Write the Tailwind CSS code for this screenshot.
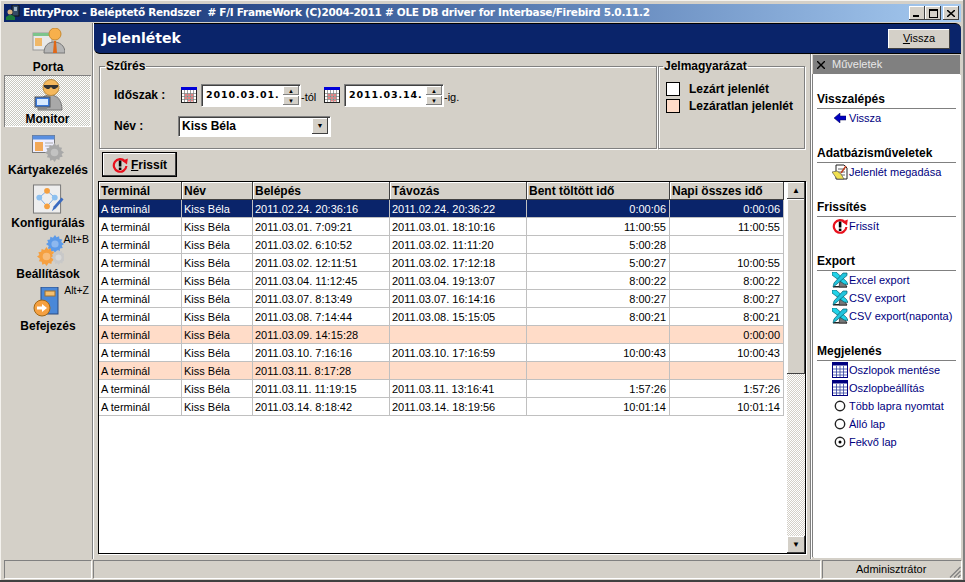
<!DOCTYPE html>
<html><head><meta charset="utf-8"><title>EntryProx</title>
<script src="https://cdn.jsdelivr.net/npm/@tailwindcss/browser@4"></script></head>
<body class="bg-[#d4d0c8]">
<svg class="hidden"><defs>
<symbol id="refresh" viewBox="0 0 16 16"><path d="M12.800 4.200A6.300 6.300 0 1 0 14.400 9" fill="none" stroke="#e8101c" stroke-width="2.200"/><path d="M10 3.800 15.800 1.500 15 7.500z" fill="#e8101c"/><rect x="6.800" y="3.500" width="2.600" height="6" fill="#000"/><rect x="6.800" y="10.600" width="2.600" height="2.400" fill="#000"/></symbol>
<symbol id="xls" viewBox="0 0 16 16"><path d="M1 14h14v1.500H1z" fill="#222"/><path d="M8 9l5 2.500 2 3.500H7z" fill="#777" stroke="#222" stroke-width=".7"/><path d="M0 0h4l10.500 9.500 1.500 3-4-.5L0 3z" fill="#22d3e8" stroke="#075f6d" stroke-width=".7"/><path d="M11 1h4v2.500L5 12l-4 3 1-4z" fill="#22c4dd" stroke="#075f6d" stroke-width=".7"/></symbol>
<symbol id="tbl" viewBox="0 0 16 16"><rect x=".5" y=".5" width="15" height="15" fill="#fff" stroke="#000080"/><path d="M.5 .5h15v3H.5z" fill="#000080"/><path d="M1 7h14M1 10h14M1 13h14M4.500 4v11M8 4v11M11.500 4v11" stroke="#3040a0" stroke-width=".8"/></symbol>
<symbol id="cal" viewBox="0 0 16 16"><rect x=".5" y=".5" width="15" height="15" fill="#fff" stroke="#222"/><rect width="16" height="3" fill="#0000d8"/><path d="M1 6.500h14M1 9.500h14M1 12.500h14M3.500 3v12M6.500 3v12M9.500 3v12M12.500 3v12" stroke="#777" stroke-width=".7"/><path d="M4 7h2v2H4zM7 7h2v2H7zM10 7h2v2h-2zM4 10h2v2H4zM7 10h2v2H7zM10 10h2v2h-2zM7 13h2v1.500H7zM10 13h2v1.500h-2z" fill="#e88080"/></symbol>
<symbol id="gear" viewBox="0 0 20 20"><path d="M10 0l1.700 2.500 2.800-1.100.5 3 3 .5-1.100 2.800L20 10l-2.500 1.700 1.100 2.800-3 .5-.5 3-2.800-1.100L10 20l-1.700-2.500-2.800 1.100-.5-3-3-.5 1.100-2.800L0 10l2.500-1.700-1.100-2.800 3-.5.5-3 2.800 1.100z"/><circle cx="10" cy="10" r="4" fill-opacity=".3" fill="#fff"/></symbol>
<symbol id="radio" viewBox="0 0 12 12"><circle cx="6" cy="6" r="4.700" fill="#fff" stroke="#222" stroke-width="1.400"/></symbol>
<symbol id="radioOn" viewBox="0 0 12 12"><circle cx="6" cy="6" r="4.700" fill="#fff" stroke="#222" stroke-width="1.400"/><circle cx="6" cy="6" r="1.500" fill="#000"/></symbol>
</defs></svg>

<div class="w-[965px] h-[582px] overflow-hidden flex flex-col bg-[#d4d0c8] pt-[4px] px-[4px] pb-[2px] shadow-[inset_0_-2px_#404040,inset_-2px_0_#808080,inset_1px_1px_#f4f2ee] font-['Liberation_Sans',sans-serif] text-[11px] text-black">

<!-- title bar -->
<div class="h-[18px] shrink-0 flex items-center bg-gradient-to-r from-[#0a246a] to-[#a6caf0] pl-[1px] pr-[2px]">
<svg class="w-[16px] h-[16px] shrink-0" viewBox="0 0 16 16"><rect x="7" y="0" width="7" height="11" fill="#334a66" stroke="#111"/><rect x="9" y="2" width="3" height="4" fill="#9fb4c4"/><circle cx="5" cy="7" r="2.500" fill="#d8b080"/><path d="M1 15v-3l3-2h3l3 2v3z" fill="#1c7a3c"/></svg>
<span class="ml-[2px] whitespace-pre font-['DejaVu_Sans',sans-serif] font-bold text-[10.500px] tracking-[-0.29px] text-white">EntryProx - Beléptető Rendszer  # F/I FrameWork (C)2004-2011 # OLE DB driver for Interbase/Firebird 5.0.11.2</span>
<div class="ml-auto flex">
<div class="w-[16px] h-[14px] bg-[#d4d0c8] shadow-[inset_-1px_-1px_#404040,inset_1px_1px_#fff] flex items-end pl-[4px] pb-[3px]"><div class="w-[6px] h-[2px] bg-black"></div></div>
<div class="w-[16px] h-[14px] bg-[#d4d0c8] shadow-[inset_-1px_-1px_#404040,inset_1px_1px_#fff] flex items-center justify-center"><div class="w-[9px] h-[9px] border border-black border-t-2"></div></div>
<div class="ml-[2px] w-[16px] h-[14px] bg-[#d4d0c8] shadow-[inset_-1px_-1px_#404040,inset_1px_1px_#fff] flex items-center justify-center"><svg class="w-[8px] h-[7px]" viewBox="0 0 8 7"><path d="M0 0l8 7M8 0L0 7" stroke="#000" stroke-width="1.500"/></svg></div>
</div></div>

<!-- body -->
<div class="h-[536px] mt-[1px] shrink-0 flex">

<!-- sidebar -->
<div class="w-[89px] shrink-0 border-r border-[#808080] shadow-[1px_0_#fff] flex flex-col items-center font-bold text-[12px] pt-[5px]">
<div class="h-[47px] w-full flex flex-col items-center">
<svg class="w-[34px] h-[32px]" viewBox="0 0 34 32"><rect x="2" y="5" width="19" height="17" fill="#e8e8e8" stroke="#999"/><rect x="2" y="5" width="19" height="3" fill="#7cc48c"/><rect x="4" y="10" width="7" height="8" fill="#f0b868"/><path d="M13 25c0-8 5-11 10-11s11 3 11 11z" fill="#b5b5b5" stroke="#777"/><circle cx="24" cy="6" r="6" fill="#f7b04c" stroke="#c98a30"/><path d="M23 13h2l1 12h-4z" fill="#e06818"/></svg>
<span class="leading-[14px]">Porta</span></div>
<div class="h-[52px] w-[87px] self-start flex flex-col items-center pt-[4px] bg-[repeating-conic-gradient(#fff_0_25%,#c8c8c0_0_50%)] bg-[length:2px_2px] shadow-[inset_1px_1px_#808080,inset_-1px_-1px_#fff]">
<svg class="w-[32px] h-[32px]" viewBox="0 0 32 32"><path d="M6 31c0-10 5-15 12-15s12 5 12 15z" fill="#a8a8a8" stroke="#777"/><circle cx="19" cy="8.500" r="8" fill="#f5b85c" stroke="#b88a40"/><path d="M12 6h14v2l-3 2h-2l-2-2-2 2h-2l-3-2z" fill="#333"/><rect x="3" y="18" width="15" height="10" fill="#3a78d8" stroke="#555"/><rect x="5" y="20" width="11" height="6" fill="#d8eaff"/><rect x="6" y="28" width="9" height="2" fill="#888"/></svg>
<span class="leading-[14px] mt-[1px]">Monitor</span></div>
<div class="h-[51px] w-full flex flex-col items-center pt-[8px]">
<svg class="w-[32px] h-[30px]" viewBox="0 0 32 30"><rect x=".5" y=".5" width="22" height="17" fill="#eef" stroke="#777"/><rect x=".5" y=".5" width="22" height="4" fill="#5a8fe0"/><rect x="3" y="7" width="8" height="9" fill="#f2a858"/><path d="M13 8h8M13 11h8" stroke="#aaa"/><use href="#gear" x="13" y="8" width="19" height="19" fill="#a8a8a8"/></svg>
<span class="leading-[14px] mt-[-2px]">Kártyakezelés</span></div>
<div class="h-[52px] w-full flex flex-col items-center pt-[6px]">
<svg class="w-[32px] h-[31px]" viewBox="0 0 32 32"><rect x="1" y="1" width="28" height="29" fill="#eee" stroke="#777"/><path d="M15 7L7 14l8 9 8-9z" fill="none" stroke="#7aa8e0"/><circle cx="15" cy="7" r="3" fill="#f5a040"/><circle cx="7" cy="14" r="3" fill="#8cc0f0"/><circle cx="23" cy="14" r="3" fill="#8cc0f0"/><circle cx="15" cy="23" r="3" fill="#f5a040"/><path d="M20 28l2-5 8-9 2 2-8 9z" fill="#3a6ac0"/></svg>
<span class="leading-[14px] mt-[1px]">Konfigurálás</span></div>
<div class="relative h-[52px] w-full flex flex-col items-center pt-[5px]">
<span class="absolute right-[3px] top-[3px] font-normal text-[10.500px] leading-[12px]">Alt+B</span>
<svg class="w-[32px] h-[32px]" viewBox="0 0 32 32"><use href="#gear" x="14" y="0" width="18" height="18" fill="#5c9ae8"/><use href="#gear" x="5" y="12" width="19" height="19" fill="#f5a040"/><use href="#gear" x="19" y="15" width="15" height="15" fill="#c8c8c8"/></svg>
<span class="leading-[14px]">Beállítások</span></div>
<div class="relative h-[52px] w-full flex flex-col items-center pt-[5px]">
<span class="absolute right-[3px] top-[2px] font-normal text-[10.500px] leading-[12px]">Alt+Z</span>
<svg class="w-[30px] h-[30px] mr-[2px]" viewBox="0 0 30 30"><rect x="9" y="0" width="17" height="27" fill="#4a88d8" stroke="#2a4a80"/><rect x="13" y="4" width="10" height="5" fill="#f5c070" stroke="#a07030"/><circle cx="10" cy="21" r="8" fill="#f5a040" stroke="#a06818"/><path d="M5 19.500h5V17l5 4-5 4v-2.500H5z" fill="#fff"/></svg>
<span class="leading-[14px] mt-[2px]">Befejezés</span></div>
</div>

<!-- main -->
<div class="ml-[1px] flex-1 min-w-0 flex flex-col">
<div class="h-[31px] shrink-0 bg-[#0a246a] border-t border-b border-black rounded-bl-[6px] rounded-tr-[6px] flex items-center justify-between pl-[8px] pr-[11px]">
<span class="font-['DejaVu_Sans',sans-serif] font-bold text-[14px] text-white">Jelenlétek</span>
<div class="w-[62px] h-[20px] bg-[#d4d0c8] shadow-[inset_-1px_-1px_#404040,inset_1px_1px_#fff] flex items-center justify-center"><span><u>V</u>issza</span></div>
</div>
<div class="flex-1 min-h-0 flex">
<!-- left column -->
<div class="w-[717px] shrink-0 flex flex-col border-r border-[#808080] shadow-[1px_0_#fff]">
<div class="flex pl-[5px] h-[89px] mt-[6px] shrink-0">
<fieldset class="w-[558px] h-[89px] border border-[#808080] shadow-[inset_1px_1px_#fff,1px_1px_#fff] pl-[14px] flex-none">
<legend class="ml-[-9px] px-[1px] font-bold text-[12px] leading-[13px]">Szűrés</legend>
<div class="flex items-center mt-[10px] h-[24px]">
<span class="w-[67px] font-bold text-[12px]">Időszak :</span>
<svg class="w-[16px] h-[16px] mt-[-1px]" viewBox="0 0 16 16"><use href="#cal"/></svg>
<div class="ml-[4px] w-[99px] h-[22px] flex bg-white shadow-[inset_1px_1px_#808080,inset_2px_2px_#404040,1px_1px_#fff]">
<span class="pl-[5px] pt-[1px] w-[82px] font-['DejaVu_Sans',sans-serif] font-bold text-[9.500px] tracking-[0.9px] leading-[20px] whitespace-nowrap">2010.03.01.</span>
<div class="w-[16px] pt-[2px] flex flex-col gap-[1px]"><div class="h-[9px] bg-[#d4d0c8] shadow-[inset_-1px_-1px_#808080,inset_1px_1px_#fff] flex items-center justify-center text-[6px] leading-none">▲</div><div class="h-[9px] bg-[#d4d0c8] shadow-[inset_-1px_-1px_#808080,inset_1px_1px_#fff] flex items-center justify-center text-[6px] leading-none">▼</div></div>
</div>
<span class="mt-[5px] ml-[1px] w-[17px]">-tól</span>
<svg class="ml-[6px] w-[16px] h-[16px] mt-[-1px]" viewBox="0 0 16 16"><use href="#cal"/></svg>
<div class="ml-[4px] w-[99px] h-[22px] flex bg-white shadow-[inset_1px_1px_#808080,inset_2px_2px_#404040,1px_1px_#fff]">
<span class="pl-[5px] pt-[1px] w-[82px] font-['DejaVu_Sans',sans-serif] font-bold text-[9.500px] tracking-[0.9px] leading-[20px] whitespace-nowrap">2011.03.14.</span>
<div class="w-[16px] pt-[2px] flex flex-col gap-[1px]"><div class="h-[9px] bg-[#d4d0c8] shadow-[inset_-1px_-1px_#808080,inset_1px_1px_#fff] flex items-center justify-center text-[6px] leading-none">▲</div><div class="h-[9px] bg-[#d4d0c8] shadow-[inset_-1px_-1px_#808080,inset_1px_1px_#fff] flex items-center justify-center text-[6px] leading-none">▼</div></div>
</div>
<span class="mt-[5px] ml-[1px]">-ig.</span>
</div>
<div class="flex items-center mt-[8px] h-[22px]">
<span class="w-[64px] font-bold text-[12px]">Név :</span>
<div class="w-[152px] h-[20px] flex items-center justify-between bg-white shadow-[inset_1px_1px_#808080,inset_2px_2px_#404040,1px_1px_#fff] pl-[4px] pr-[2px] font-bold text-[12px]">Kiss Béla<div class="w-[16px] h-[16px] bg-[#d4d0c8] shadow-[inset_-1px_-1px_#404040,inset_1px_1px_#fff] flex items-center justify-center text-[7px]">▼</div></div>
</div>
</fieldset>
<fieldset class="ml-[1px] w-[147px] h-[89px] border border-[#808080] shadow-[inset_1px_1px_#fff,1px_1px_#fff] pl-[7px] flex-none">
<legend class="ml-[-3px] px-[1px] font-bold text-[12px] leading-[13px]">Jelmagyarázat</legend>
<div class="flex items-center font-bold text-[12px] h-[17px] mt-[7px]"><div class="w-[14px] h-[14px] bg-white border border-black mr-[9px]"></div>Lezárt jelenlét</div>
<div class="flex items-center font-bold text-[12px] h-[17px]"><div class="w-[14px] h-[14px] bg-[#ffdcc8] border border-black mr-[9px]"></div>Lezáratlan jelenlét</div>
</fieldset>
</div>
<div class="pl-[8px] mt-[3px] h-[25px] shrink-0">
<div class="w-[75px] h-[25px] border border-black bg-[#d4d0c8] shadow-[inset_-1px_-1px_#404040,inset_1px_1px_#fff] flex items-center justify-center gap-[3px] font-bold text-[12px]"><svg class="w-[16px] h-[16px]" viewBox="0 0 16 16"><use href="#refresh"/></svg><span><u>F</u>rissít</span></div>
</div>
<!-- grid -->
<div class="ml-[4px] mt-[4px] w-[708px] h-[373px] border border-black bg-white flex shadow-[1px_1px_#fff]">
<div class="w-[688px] flex flex-col *:grid *:w-[685px] *:grid-cols-[83px_71px_137px_137px_143px_114px] *:h-[18px] *:leading-[19px]">
<div class="font-bold text-[12px] *:bg-[#d4d0c8] *:px-[2px] *:whitespace-nowrap *:leading-[18px] *:shadow-[inset_-1px_-1px_#404040,inset_1px_1px_#fff]"><div>Terminál</div><div>Név</div><div>Belépés</div><div>Távozás</div><div>Bent töltött idő</div><div>Napi összes idő</div></div>
<div class="*:px-[2px] *:border-r *:border-b *:border-[#c0c0c0] *:whitespace-nowrap *:overflow-hidden [&>*:nth-child(n+5)]:text-right [&>*:nth-child(n+5)]:pr-[3px] bg-[#0a246a] text-white"><div>A terminál</div><div>Kiss Béla</div><div>2011.02.24. 20:36:16</div><div>2011.02.24. 20:36:22</div><div>0:00:06</div><div>0:00:06</div></div>
<div class="*:px-[2px] *:border-r *:border-b *:border-[#c0c0c0] *:whitespace-nowrap *:overflow-hidden [&>*:nth-child(n+5)]:text-right [&>*:nth-child(n+5)]:pr-[3px]"><div>A terminál</div><div>Kiss Béla</div><div>2011.03.01. 7:09:21</div><div>2011.03.01. 18:10:16</div><div>11:00:55</div><div>11:00:55</div></div>
<div class="*:px-[2px] *:border-r *:border-b *:border-[#c0c0c0] *:whitespace-nowrap *:overflow-hidden [&>*:nth-child(n+5)]:text-right [&>*:nth-child(n+5)]:pr-[3px]"><div>A terminál</div><div>Kiss Béla</div><div>2011.03.02. 6:10:52</div><div>2011.03.02. 11:11:20</div><div>5:00:28</div><div></div></div>
<div class="*:px-[2px] *:border-r *:border-b *:border-[#c0c0c0] *:whitespace-nowrap *:overflow-hidden [&>*:nth-child(n+5)]:text-right [&>*:nth-child(n+5)]:pr-[3px]"><div>A terminál</div><div>Kiss Béla</div><div>2011.03.02. 12:11:51</div><div>2011.03.02. 17:12:18</div><div>5:00:27</div><div>10:00:55</div></div>
<div class="*:px-[2px] *:border-r *:border-b *:border-[#c0c0c0] *:whitespace-nowrap *:overflow-hidden [&>*:nth-child(n+5)]:text-right [&>*:nth-child(n+5)]:pr-[3px]"><div>A terminál</div><div>Kiss Béla</div><div>2011.03.04. 11:12:45</div><div>2011.03.04. 19:13:07</div><div>8:00:22</div><div>8:00:22</div></div>
<div class="*:px-[2px] *:border-r *:border-b *:border-[#c0c0c0] *:whitespace-nowrap *:overflow-hidden [&>*:nth-child(n+5)]:text-right [&>*:nth-child(n+5)]:pr-[3px]"><div>A terminál</div><div>Kiss Béla</div><div>2011.03.07. 8:13:49</div><div>2011.03.07. 16:14:16</div><div>8:00:27</div><div>8:00:27</div></div>
<div class="*:px-[2px] *:border-r *:border-b *:border-[#c0c0c0] *:whitespace-nowrap *:overflow-hidden [&>*:nth-child(n+5)]:text-right [&>*:nth-child(n+5)]:pr-[3px]"><div>A terminál</div><div>Kiss Béla</div><div>2011.03.08. 7:14:44</div><div>2011.03.08. 15:15:05</div><div>8:00:21</div><div>8:00:21</div></div>
<div class="*:px-[2px] *:border-r *:border-b *:border-[#c0c0c0] *:whitespace-nowrap *:overflow-hidden [&>*:nth-child(n+5)]:text-right [&>*:nth-child(n+5)]:pr-[3px] bg-[#ffdcc8]"><div>A terminál</div><div>Kiss Béla</div><div>2011.03.09. 14:15:28</div><div></div><div></div><div>0:00:00</div></div>
<div class="*:px-[2px] *:border-r *:border-b *:border-[#c0c0c0] *:whitespace-nowrap *:overflow-hidden [&>*:nth-child(n+5)]:text-right [&>*:nth-child(n+5)]:pr-[3px]"><div>A terminál</div><div>Kiss Béla</div><div>2011.03.10. 7:16:16</div><div>2011.03.10. 17:16:59</div><div>10:00:43</div><div>10:00:43</div></div>
<div class="*:px-[2px] *:border-r *:border-b *:border-[#c0c0c0] *:whitespace-nowrap *:overflow-hidden [&>*:nth-child(n+5)]:text-right [&>*:nth-child(n+5)]:pr-[3px] bg-[#ffdcc8]"><div>A terminál</div><div>Kiss Béla</div><div>2011.03.11. 8:17:28</div><div></div><div></div><div></div></div>
<div class="*:px-[2px] *:border-r *:border-b *:border-[#c0c0c0] *:whitespace-nowrap *:overflow-hidden [&>*:nth-child(n+5)]:text-right [&>*:nth-child(n+5)]:pr-[3px]"><div>A terminál</div><div>Kiss Béla</div><div>2011.03.11. 11:19:15</div><div>2011.03.11. 13:16:41</div><div>1:57:26</div><div>1:57:26</div></div>
<div class="*:px-[2px] *:border-r *:border-b *:border-[#c0c0c0] *:whitespace-nowrap *:overflow-hidden [&>*:nth-child(n+5)]:text-right [&>*:nth-child(n+5)]:pr-[3px]"><div>A terminál</div><div>Kiss Béla</div><div>2011.03.14. 8:18:42</div><div>2011.03.14. 18:19:56</div><div>10:01:14</div><div>10:01:14</div></div>
</div>
<div class="w-[18px] ml-auto flex flex-col bg-[repeating-conic-gradient(#fff_0_25%,#d4d0c8_0_50%)] bg-[length:2px_2px]">
<div class="h-[17px] bg-[#d4d0c8] shadow-[inset_-1px_-1px_#404040,inset_1px_1px_#fff] flex items-center justify-center text-[8px]">▲</div>
<div class="h-[175px] bg-[#d4d0c8] shadow-[inset_-1px_-1px_#404040,inset_1px_1px_#fff]"></div>
<div class="mt-auto h-[17px] bg-[#d4d0c8] shadow-[inset_-1px_-1px_#404040,inset_1px_1px_#fff] flex items-center justify-center text-[8px]">▼</div>
</div>
</div>
</div>
<!-- right panel -->
<div class="ml-[2px] mt-[1px] mb-[2px] w-[147px] shrink-0 flex flex-col">
<div class="h-[19px] shrink-0 bg-[#808080] flex items-center pl-[4px] text-[#e8e8e8]"><svg class="w-[8px] h-[8px] mr-[7px]" viewBox="0 0 8 8"><path d="M0 0l8 8M8 0L0 8" stroke="#000" stroke-width="1.400"/></svg>Műveletek</div>
<div class="flex-1 min-h-0 bg-white pl-[4px] pr-[4px] shadow-[-1px_0_#808080,1px_1px_#fff] text-[#000080] *:whitespace-nowrap">
<div class="pt-[17px] font-bold text-[12px] text-black h-[35px] border-b border-[#808080] leading-[17px]">Visszalépés</div>
<div class="flex items-center h-[18px] pl-[17px] gap-[3px]"><svg class="w-[12px] h-[10px]" viewBox="0 0 12 10"><path d="M0 5l6-5v3h6v4H6v3z" fill="#0000c0" stroke="#000050" stroke-width=".5"/></svg>Vissza</div>
<div class="mt-[18px] pt-[1px] font-bold text-[12px] text-black h-[18px] border-b border-[#808080] leading-[15px]">Adatbázisműveletek</div>
<div class="flex items-center h-[18px] pl-[15px] gap-[1px]"><svg class="w-[16px] h-[16px]" viewBox="0 0 16 16"><path d="M4 1h8l3 3v11H4z" fill="#fff" stroke="#222"/><path d="M6 5h7M6 8h7M6 11h7" stroke="#666"/><path d="M0 8l5-1 4 3 3 5H5z" fill="#f0e050" stroke="#444" stroke-width=".6"/><path d="M9 9l5-7" stroke="#c04020" stroke-width="1.500"/></svg>Jelenlét megadása</div>
<div class="mt-[18px] pt-[1px] font-bold text-[12px] text-black h-[18px] border-b border-[#808080] leading-[15px]">Frissítés</div>
<div class="flex items-center h-[18px] pl-[15px] gap-[1px]"><svg class="w-[16px] h-[16px]" viewBox="0 0 16 16"><use href="#refresh"/></svg>Frissít</div>
<div class="mt-[18px] pt-[1px] font-bold text-[12px] text-black h-[18px] border-b border-[#808080] leading-[15px]">Export</div>
<div class="flex items-center h-[18px] pl-[15px] gap-[1px]"><svg class="w-[16px] h-[16px]" viewBox="0 0 16 16"><use href="#xls"/></svg>Excel export</div>
<div class="flex items-center h-[18px] pl-[15px] gap-[1px]"><svg class="w-[16px] h-[16px]" viewBox="0 0 16 16"><use href="#xls"/></svg>CSV export</div>
<div class="flex items-center h-[18px] pl-[15px] gap-[1px]"><svg class="w-[16px] h-[16px]" viewBox="0 0 16 16"><use href="#xls"/></svg>CSV export(naponta)</div>
<div class="mt-[18px] pt-[1px] font-bold text-[12px] text-black h-[18px] border-b border-[#808080] leading-[15px]">Megjelenés</div>
<div class="flex items-center h-[18px] pl-[15px] gap-[1px]"><svg class="w-[16px] h-[16px]" viewBox="0 0 16 16"><use href="#tbl"/></svg>Oszlopok mentése</div>
<div class="flex items-center h-[18px] pl-[15px] gap-[1px]"><svg class="w-[16px] h-[16px]" viewBox="0 0 16 16"><use href="#tbl"/></svg>Oszlopbeállítás</div>
<div class="flex items-center h-[18px] pl-[17px] gap-[3px]"><svg class="w-[12px] h-[12px]" viewBox="0 0 12 12"><use href="#radio"/></svg>Több lapra nyomtat</div>
<div class="flex items-center h-[18px] pl-[17px] gap-[3px]"><svg class="w-[12px] h-[12px]" viewBox="0 0 12 12"><use href="#radio"/></svg>Álló lap</div>
<div class="flex items-center h-[18px] pl-[17px] gap-[3px]"><svg class="w-[12px] h-[12px]" viewBox="0 0 12 12"><use href="#radioOn"/></svg>Fekvő lap</div>
</div></div>
</div></div></div>

<!-- status -->
<div class="h-[18px] mt-[1px] shrink-0 flex">
<div class="w-[87px] mr-[2px] shadow-[inset_1px_1px_#808080,1px_1px_#fff]"></div>
<div class="w-[727px] mr-[2px] shadow-[inset_1px_1px_#808080,1px_1px_#fff]"></div>
<div class="flex-1 shadow-[inset_1px_1px_#808080,1px_1px_#fff] pl-[34px] leading-[18px] relative">Adminisztrátor<svg class="absolute right-0 bottom-0 w-[12px] h-[12px]" viewBox="0 0 12 12"><path d="M11.500 1L1 11.500M11.500 5L5 11.500M11.500 9L9 11.500" stroke="#808080" stroke-width="1.200"/></svg></div>
</div>
</div>
</body></html>
